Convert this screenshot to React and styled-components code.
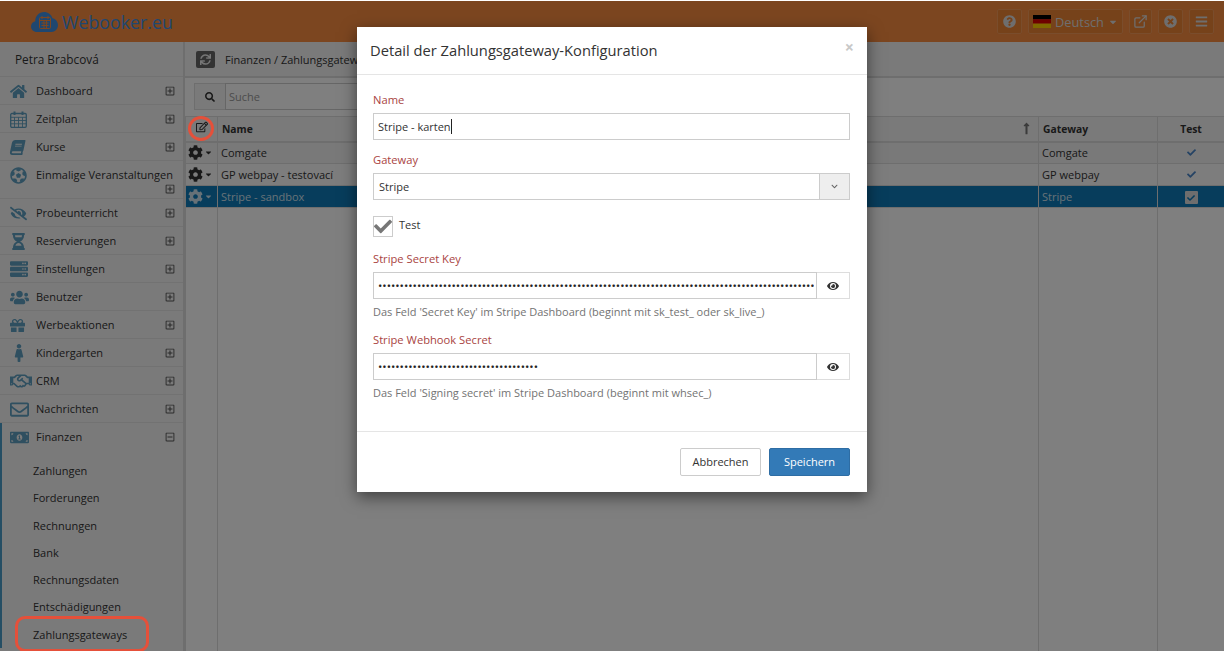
import React from "react"
import styled, { createGlobalStyle } from "styled-components"
import {
  FaBars,
  FaBook,
  FaCaretDown,
  FaCheck,
  FaChevronDown,
  FaCog,
  FaEye,
  FaEyeSlash,
  FaFemale,
  FaFutbol,
  FaGift,
  FaHome,
  FaHourglassHalf,
  FaLongArrowAltUp,
  FaMoneyBillAlt,
  FaQuestionCircle,
  FaRegEdit,
  FaRegEnvelope,
  FaRegHandshake,
  FaRegMinusSquare,
  FaRegPlusSquare,
  FaSearch,
  FaServer,
  FaSync,
  FaTimesCircle,
  FaUsers,
} from "react-icons/fa"
import { FiExternalLink } from "react-icons/fi"

const GlobalStyle = createGlobalStyle`
  html, body {
    margin: 0;
    height: 651px;
    overflow: hidden;
    background: #fff;
  }
  * {
    box-sizing: border-box;
  }
  body {
    font-family: "Open Sans", "Liberation Sans", sans-serif;
    font-size: 11px;
    color: #333;
  }
`

const CalendarIcon = () => (
  <svg width="17" height="17" viewBox="0 0 17 17" fill="none" stroke="currentColor">
    <rect x="0.7" y="2.5" width="15.6" height="13.8" rx="1.2" strokeWidth="1.3" />
    <path d="M0.7 6.3H16.3M0.7 9.5H16.3M0.7 12.8H16.3M4.5 6.3V16M8.5 6.3V16M12.5 6.3V16" strokeWidth="0.9" />
    <path d="M4.5 0.5V4M12.5 0.5V4" strokeWidth="2" />
  </svg>
)

const menu = [
  { label: "Dashboard", icon: <FaHome size={17} /> },
  { label: "Zeitplan", icon: <CalendarIcon /> },
  { label: "Kurse", icon: <SlantedBook size={15} /> },
  { label: "Einmalige Veranstaltungen", icon: <FaFutbol size={17} /> },
  { label: "Probeunterricht", icon: <FaEyeSlash size={17} /> },
  { label: "Reservierungen", icon: <FaHourglassHalf size={17} /> },
  { label: "Einstellungen", icon: <FaServer size={18} /> },
  { label: "Benutzer", icon: <FaUsers size={19} /> },
  { label: "Werbeaktionen", icon: <FaGift size={15} /> },
  { label: "Kindergarten", icon: <FaFemale size={18} /> },
  { label: "CRM", icon: <FaRegHandshake size={22} /> },
  { label: "Nachrichten", icon: <FaRegEnvelope size={19} /> },
  { label: "Finanzen", icon: <FaMoneyBillAlt size={19} />, open: true },
]

const subMenu = [
  "Zahlungen",
  "Forderungen",
  "Rechnungen",
  "Bank",
  "Rechnungsdaten",
  "Entschädigungen",
  "Zahlungsgateways",
]

const rows = [
  { name: "Comgate", gateway: "Comgate" },
  { name: "GP webpay - testovací", gateway: "GP webpay" },
  { name: "Stripe - sandbox", gateway: "Stripe", selected: true },
]

const secretKey = "x".repeat(170)
const webhookSecret = "x".repeat(37)

export default function App() {
  return (
    <Page>
      <GlobalStyle />
      <Header>
        <Logo>
          <svg width="27" height="22" viewBox="0 0 27 22">
            <path
              d="M6 21C2.5 21 0 18.5 0 15.5C0 12.8 1.8 10.8 4.2 10.2C4.2 5 8 1 13 1C17 1 20.5 3.6 21.5 7.2C24.6 7.8 27 10.6 27 14C27 18 24 21 20.5 21Z"
              fill="#3f8fe0"
            />
            <rect x="8.5" y="6.5" width="11" height="11" rx="1" fill="none" stroke="#f88c40" strokeWidth="1" />
            <path d="M8.5 9.5H19.5M11 5V8M17 5V8M10.5 12H17.5M10.5 14.5H17.5M13 10V17M15.5 10V17" stroke="#f88c40" strokeWidth="1" />
          </svg>
          <LogoText>Webooker.eu</LogoText>
        </Logo>
        <HeaderTools>
          <ToolButton $width={25}>
            <FaQuestionCircle size={13} />
          </ToolButton>
          <ToolButton $width={95}>
            <svg width="18" height="13" viewBox="0 0 18 13">
              <rect width="18" height="4.4" fill="#000" />
              <rect y="4.3" width="18" height="4.4" fill="#d00" />
              <rect y="8.6" width="18" height="4.4" fill="#ffce00" />
            </svg>
            <LangText>Deutsch</LangText>
            <FaCaretDown size={10} />
          </ToolButton>
          <ToolButton $width={23}>
            <FiExternalLink size={15} />
          </ToolButton>
          <ToolButton $width={25}>
            <FaTimesCircle size={13} />
          </ToolButton>
          <ToolButton $width={25}>
            <FaBars size={13} />
          </ToolButton>
        </HeaderTools>
      </Header>
      <Content>
        <Sidebar>
          <UserName>Petra Brabcová</UserName>
          {menu.map((item) => (
            <MenuRow key={item.label} $active={item.open}>
              <MenuIcon>{item.icon}</MenuIcon>
              <MenuLabel>{item.label}</MenuLabel>
              <Expander>
                {item.open ? <FaRegMinusSquare size={10} /> : <FaRegPlusSquare size={10} />}
              </Expander>
            </MenuRow>
          ))}
          <SubMenu>
            {subMenu.map((item) => (
              <SubItem key={item}>{item}</SubItem>
            ))}
          </SubMenu>
        </Sidebar>
        <Main>
          <Breadcrumb>
            <RefreshButton>
              <FaSync size={11} />
            </RefreshButton>
            <span>Finanzen / Zahlungsgateways</span>
          </Breadcrumb>
          <SearchBar>
            <SearchButton>
              <FaSearch size={10} />
            </SearchButton>
            <SearchInput>Suche</SearchInput>
          </SearchBar>
          <Table>
            <colgroup>
              <col width="32" />
              <col width="821" />
              <col width="119" />
              <col width="67" />
            </colgroup>
            <thead>
              <tr>
                <HeadCell $center>
                  <FaRegEdit size={12} />
                </HeadCell>
                <HeadCell>
                  <SortCell>
                    Name
                    <FaLongArrowAltUp size={13} color="#777" />
                  </SortCell>
                </HeadCell>
                <HeadCell>Gateway</HeadCell>
                <HeadCell $center>Test</HeadCell>
              </tr>
            </thead>
            <tbody>
              {rows.map((row, i) => (
                <Row key={row.name} $selected={row.selected} $odd={i % 2 === 0}>
                  <Cell>
                    <ActionIcon>
                      <FaCog size={15} />
                      <FaCaretDown size={9} />
                    </ActionIcon>
                  </Cell>
                  <Cell>{row.name}</Cell>
                  <Cell>{row.gateway}</Cell>
                  <Cell $center>
                    {row.selected ? (
                      <TickBox>
                        <FaCheck size={8} />
                      </TickBox>
                    ) : (
                      <FaCheck size={9} color="#4a86c8" />
                    )}
                  </Cell>
                </Row>
              ))}
              <FillerRow>
                <td />
                <td />
                <td />
                <td />
              </FillerRow>
            </tbody>
          </Table>
        </Main>
      </Content>
      <Overlay />
      <EditMark />
      <GatewaysMark />
      <Modal>
        <ModalHeader>
          <ModalTitle>Detail der Zahlungsgateway-Konfiguration</ModalTitle>
          <CloseMark>×</CloseMark>
        </ModalHeader>
        <ModalBody>
          <Group>
            <Label>Name</Label>
            <Box>
              <NameText>Stripe - karten</NameText>
            </Box>
          </Group>
          <Group>
            <Label>Gateway</Label>
            <Box>
              <SelectText>Stripe</SelectText>
              <SelectArrow>
                <FaChevronDown size={7} />
              </SelectArrow>
            </Box>
          </Group>
          <CheckRow>
            <CheckBox>
              <FaCheck size={19} />
            </CheckBox>
            <CheckText>Test</CheckText>
          </CheckRow>
          <Group>
            <Label>Stripe Secret Key</Label>
            <SecretRow>
              <SecretInput type="password" value={secretKey} readOnly />
              <EyeButton>
                <FaEye size={12} />
              </EyeButton>
            </SecretRow>
            <Help>Das Feld 'Secret Key' im Stripe Dashboard (beginnt mit sk_test_ oder sk_live_)</Help>
          </Group>
          <Group>
            <Label>Stripe Webhook Secret</Label>
            <SecretRow>
              <SecretInput type="password" value={webhookSecret} readOnly />
              <EyeButton>
                <FaEye size={12} />
              </EyeButton>
            </SecretRow>
            <Help>Das Feld 'Signing secret' im Stripe Dashboard (beginnt mit whsec_)</Help>
          </Group>
        </ModalBody>
        <ModalFooter>
          <Button>Abbrechen</Button>
          <Button $primary>Speichern</Button>
        </ModalFooter>
      </Modal>
    </Page>
  )
}

function SlantedBook(props) {
  return <BookGlyph {...props} />
}

const BookGlyph = styled(FaBook)`
  transform: skewX(-12deg);
`

const Page = styled.div`
  position: relative;
  height: 651px;
  padding-top: 1px;
  overflow: hidden;
  display: flex;
  flex-direction: column;
`

const Header = styled.header`
  height: 41px;
  flex: none;
  background: #f88c40;
  display: flex;
  align-items: center;
  justify-content: space-between;
  padding: 0 10px 0 31px;
`

const Logo = styled.div`
  display: flex;
  align-items: center;
  gap: 4px;
`

const LogoText = styled.span`
  font-size: 17.8px;
  color: #3f8fe0;
`

const HeaderTools = styled.div`
  display: flex;
  gap: 6px;
`

const ToolButton = styled.div`
  width: ${(p) => p.$width}px;
  height: 25px;
  display: flex;
  align-items: center;
  justify-content: center;
  gap: 4px;
  color: #ddd;
  background: #ed8435;
  border: 1px solid #f59a58;
  border-radius: 2px;
`

const LangText = styled.span`
  font-size: 12.8px;
`

const Content = styled.div`
  flex: 1;
  display: flex;
  min-height: 0;
`

const Sidebar = styled.aside`
  width: 185px;
  flex: none;
  background: #f5f5f5;
  border-right: 2px solid #ddd;
`

const UserName = styled.div`
  height: 35px;
  padding: 0 0 0 15px;
  display: flex;
  align-items: center;
  font-size: 11.8px;
  border-bottom: 1px solid #e4e4e4;
`

const MenuRow = styled.div`
  display: flex;
  flex-wrap: wrap;
  align-items: center;
  padding: 5px 8px ${(p) => (p.$active ? 5 : 4)}px ${(p) => (p.$active ? 7 : 9)}px;
  border-bottom: ${(p) => (p.$active ? "none" : "1px solid #e4e4e4")};
  border-left: ${(p) => (p.$active ? "2px solid #4a9cc8" : "none")};
`

const MenuIcon = styled.span`
  width: 27px;
  height: 18px;
  flex: none;
  display: flex;
  align-items: center;
  padding-left: 1px;
  color: #5f9fc0;
`

const MenuLabel = styled.span`
  line-height: 18px;
  white-space: nowrap;
`

const Expander = styled.span`
  height: 10px;
  margin-left: auto;
  display: flex;
  color: #555;
`

const SubMenu = styled.div`
  padding: 6px 0 0 33px;
  border-left: 2px solid #4a9cc8;
`

const SubItem = styled.div`
  height: 27.3px;
  line-height: 27px;
  margin-left: -2px;
`

const Main = styled.main`
  flex: 1;
  min-width: 0;
  display: flex;
  flex-direction: column;
`

const Breadcrumb = styled.div`
  height: 36px;
  flex: none;
  padding-left: 11px;
  display: flex;
  align-items: center;
  gap: 10px;
  background: #f5f5f5;
  border-bottom: 2px solid #ddd;
`

const RefreshButton = styled.div`
  width: 19px;
  height: 17px;
  display: flex;
  align-items: center;
  justify-content: center;
  color: #eee;
  background: #666;
  border-radius: 2px;
`

const SearchBar = styled.div`
  width: 320px;
  height: 27px;
  margin: 5px 0 6px 9px;
  flex: none;
  display: flex;
`

const SearchButton = styled.div`
  width: 31px;
  display: flex;
  align-items: center;
  justify-content: center;
  background: #f5f5f5;
  border: 1px solid #ddd;
  border-right: none;
`

const SearchInput = styled.div`
  flex: 1;
  padding-left: 3px;
  display: flex;
  align-items: center;
  color: #999;
  border: 1px solid #ccc;
`

const Table = styled.table`
  width: 1039px;
  table-layout: fixed;
  border-collapse: collapse;
`

const HeadCell = styled.th`
  height: 25px;
  padding: 0 ${(p) => (p.$center ? "0" : "5px 0 4px")};
  font-size: 10.3px;
  font-weight: 700;
  text-align: ${(p) => (p.$center ? "center" : "left")};
  background: #f5f5f5;
  border: 1px solid #ddd;
  border-bottom-width: 2px;
`

const SortCell = styled.div`
  display: flex;
  justify-content: space-between;
  align-items: center;
`

const Row = styled.tr`
  height: 22px;
  color: ${(p) => (p.$selected ? "#cfe3ef" : "#333")};
  background: ${(p) => (p.$selected ? "#0e7ab8" : p.$odd ? "#f3f3f3" : "#fafafa")};
`

const Cell = styled.td`
  padding: 0 3px;
  text-align: ${(p) => (p.$center ? "center" : "left")};
  border: 1px solid #ddd;
`

const ActionIcon = styled.span`
  display: flex;
  align-items: center;
  gap: 1px;
  margin-left: -1px;
`

const TickBox = styled.span`
  display: inline-flex;
  align-items: center;
  justify-content: center;
  width: 13px;
  height: 13px;
  color: #0e7ab8;
  background: #ddd;
  border-radius: 1px;
  vertical-align: middle;
`

const FillerRow = styled.tr`
  height: 460px;
  td {
    border: 1px solid #ddd;
    border-top: none;
  }
`

const Overlay = styled.div`
  position: absolute;
  top: 1px;
  left: 0;
  right: 0;
  bottom: 0;
  background: rgba(0, 0, 0, 0.5);
`

const EditMark = styled.div`
  position: absolute;
  left: 188px;
  top: 116px;
  width: 26px;
  height: 25px;
  border: 3px solid #e5503a;
  border-radius: 50%;
`

const GatewaysMark = styled.div`
  position: absolute;
  left: 15px;
  top: 616px;
  width: 134px;
  height: 36px;
  border: 3px solid #e5503a;
  border-radius: 10px;
`

const Modal = styled.div`
  position: absolute;
  left: 357px;
  top: 27px;
  width: 510px;
  height: 465px;
  display: flex;
  flex-direction: column;
  background: #fff;
  box-shadow: 0 5px 15px rgba(0, 0, 0, 0.5);
`

const ModalHeader = styled.div`
  height: 48px;
  flex: none;
  padding: 0 13px;
  display: flex;
  justify-content: space-between;
  border-bottom: 1px solid #e5e5e5;
`

const ModalTitle = styled.h4`
  margin: 0;
  font-size: 14.7px;
  font-weight: 400;
  line-height: 47px;
`

const CloseMark = styled.span`
  font-size: 16px;
  font-weight: 700;
  line-height: 40px;
  color: #c8c8c8;
`

const ModalBody = styled.div`
  flex: 1;
  padding: 16px 17px 0 16px;
`

const Group = styled.div`
  margin-bottom: 11px;
`

const Label = styled.div`
  height: 22px;
  line-height: 18px;
  font-size: 11.2px;
  color: #a94442;
`

const Box = styled.div`
  height: 27px;
  display: flex;
  align-items: center;
  justify-content: space-between;
  background: #fff;
  border: 1px solid #ccc;
`

const NameText = styled.span`
  padding-left: 4px;
  border-right: 1px solid #222;
  line-height: 15px;
`

const SelectText = styled.span`
  padding: 0 0 1px 5px;
`

const SelectArrow = styled.span`
  width: 30px;
  height: 100%;
  display: flex;
  align-items: center;
  justify-content: center;
  color: #666;
  background: #eee;
  border-left: 1px solid #ccc;
`

const CheckRow = styled.div`
  height: 21px;
  margin: 16px 0 13px;
  display: flex;
  align-items: flex-start;
  gap: 6px;
`

const CheckText = styled.span`
  line-height: 18px;
`

const CheckBox = styled.span`
  width: 20px;
  height: 21px;
  display: flex;
  align-items: flex-end;
  justify-content: center;
  overflow: hidden;
  color: #777;
  border: 1px solid #ccc;
`

const SecretRow = styled.div`
  height: 27px;
  display: flex;
`

const SecretInput = styled.input`
  flex: 1;
  min-width: 0;
  padding: 0 2px 0 4px;
  font-family: inherit;
  font-size: 11.5px;
  color: #222;
  border: 1px solid #ccc;
  border-radius: 0;
  outline: none;
`

const EyeButton = styled.span`
  width: 33px;
  display: flex;
  align-items: center;
  justify-content: center;
  color: #333;
  border: 1px solid #ddd;
  border-left: none;
`

const Help = styled.div`
  margin-top: 5px;
  line-height: 16px;
  font-size: 11px;
  color: #737373;
`

const ModalFooter = styled.div`
  height: 61px;
  flex: none;
  padding: 16px 17px 0 0;
  display: flex;
  justify-content: flex-end;
  gap: 8px;
  border-top: 1px solid #e5e5e5;
`

const Button = styled.div`
  width: 81px;
  height: 28px;
  padding-bottom: 1px;
  display: flex;
  align-items: center;
  justify-content: center;
  color: ${(p) => (p.$primary ? "#fff" : "#333")};
  background: ${(p) => (p.$primary ? "#337ab7" : "#fff")};
  border: 1px solid ${(p) => (p.$primary ? "#2e6da4" : "#ccc")};
  border-radius: 2px;
`
